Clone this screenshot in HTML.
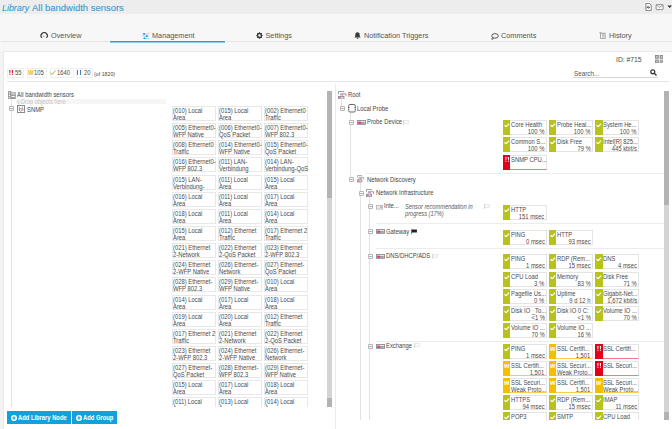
<!DOCTYPE html>
<html><head><meta charset="utf-8"><style>
html,body{margin:0;padding:0;}
body{width:672px;height:429px;overflow:hidden;position:relative;background:#f5f5f5;font-family:"Liberation Sans",sans-serif;}
.a{position:absolute;}
.t{position:absolute;white-space:nowrap;}
</style></head><body>
<div class="a" style="left:0px;top:0px;width:672px;height:14px;background:#ededed;"></div>
<div class="a" style="left:0px;top:14px;width:672px;height:37px;background:#f7f7f7;"></div>
<div class="a" style="left:0px;top:51px;width:3px;height:378px;background:#f3f3f3;"></div>
<div class="t" style="left:1.6px;top:3px;font-size:9.9px;line-height:10px;color:#399ed9;transform:scaleX(0.9);transform-origin:0 0;-webkit-text-stroke:0.15px #399ed9;font-style:italic">Library</div>
<div class="t" style="left:32.1px;top:3px;font-size:9.9px;line-height:10px;color:#399ed9;transform:scaleX(0.955);transform-origin:0 0;-webkit-text-stroke:0.15px #399ed9">All bandwidth sensors</div>
<svg class="a" style="left:645px;top:2.5px" width="27" height="8" viewBox="0 0 27 8">
<path d="M0.9 0.4h3.6l1.7 1.7v5.5H0.9z" fill="#fafafa" stroke="#6a6a6a" stroke-width="0.8"/>
<path d="M5 4.3H2.3M3.4 3.1L2.2 4.3 3.4 5.5" fill="none" stroke="#333" stroke-width="0.8"/>
<rect x="11.1" y="1.6" width="7" height="5" rx="0.5" fill="#fafafa" stroke="#777" stroke-width="0.8"/>
<path d="M11.3 2l3.3 2.4 3.3-2.4" fill="none" stroke="#777" stroke-width="0.7"/>
<path d="M22.4 2.4h4.6l-2.3 2.6z" fill="#333"/>
</svg>
<div class="a" style="left:1px;top:41px;width:108px;height:1px;background:#e6e6e6;"></div>
<div class="a" style="left:226px;top:41px;width:446px;height:1px;background:#e6e6e6;"></div>
<div class="a" style="left:110px;top:41px;width:115px;height:1px;background:#27a0d9;"></div>
<div class="a" style="left:110px;top:42px;width:115px;height:1px;background:#27a0d980;"></div>
<div class="t" style="left:51px;top:31px;font-size:7.3px;line-height:10px;color:#555;">Overview</div>
<div class="t" style="left:152px;top:31px;font-size:7.3px;line-height:10px;color:#555;">Management</div>
<div class="t" style="left:265.5px;top:31px;font-size:7.3px;line-height:10px;color:#555;">Settings</div>
<div class="t" style="left:364px;top:31px;font-size:7.3px;line-height:10px;color:#555;">Notification Triggers</div>
<div class="t" style="left:501px;top:31px;font-size:7.3px;line-height:10px;color:#555;">Comments</div>
<div class="t" style="left:609px;top:31px;font-size:7.3px;line-height:10px;color:#555;">History</div>
<svg class="a" style="left:40.2px;top:32.4px" width="8.5" height="7" viewBox="0 0 8.5 7">
<path d="M2 5.9A3.1 3.1 0 1 1 6.4 5.9" fill="none" stroke="#3a3a3a" stroke-width="1.2"/>
<path d="M3.3 3.6l1.3 1.5" stroke="#777" stroke-width="0.9"/></svg>
<svg class="a" style="left:142px;top:32.5px" width="7.5" height="6.5" viewBox="0 0 7.5 6.5">
<path d="M0.4 0.9h6.6M0.4 3.2h6.6M0.4 5.5h6.6" stroke="#8fcbee" stroke-width="0.8"/>
<rect x="1.2" y="0" width="1.8" height="1.8" rx="0.5" fill="#1e9be0"/><rect x="3.8" y="2.3" width="1.8" height="1.8" rx="0.5" fill="#1e9be0"/><rect x="1.8" y="4.6" width="1.8" height="1.8" rx="0.5" fill="#1e9be0"/></svg>
<svg class="a" style="left:256px;top:32px" width="7" height="7" viewBox="0 0 7 7">
<path d="M3.5 0.1L4.5 1.1H5.9V2.5L6.9 3.5L5.9 4.5V5.9H4.5L3.5 6.9L2.5 5.9H1.1V4.5L0.1 3.5L1.1 2.5V1.1H2.5Z" fill="#3a3a3a"/>
<circle cx="3.5" cy="3.5" r="1.2" fill="#f7f7f7"/></svg>
<svg class="a" style="left:354px;top:32px" width="7" height="7" viewBox="0 0 7 7">
<path d="M3.5 0.3c-1.5 0-2.2 1.1-2.2 2.4v1.6L0.3 5.6h6.4L5.7 4.3V2.7C5.7 1.4 5 0.3 3.5 0.3z" fill="#3a3a3a"/>
<path d="M2.6 6.2a0.9 0.9 0 0 0 1.8 0z" fill="#3a3a3a"/></svg>
<svg class="a" style="left:491px;top:32.5px" width="8" height="7" viewBox="0 0 8 7">
<ellipse cx="4" cy="2.9" rx="3.3" ry="2.3" fill="none" stroke="#4a4a4a" stroke-width="0.9"/>
<path d="M1.4 4.4L0.9 6.6 2.9 5.1" fill="#f7f7f7" stroke="#4a4a4a" stroke-width="0.8"/></svg>
<svg class="a" style="left:599px;top:32px" width="7" height="7" viewBox="0 0 7 7">
<path d="M1.6 1.2h4.6v5.4H1.6z" fill="#fafafa" stroke="#8a8a8a" stroke-width="0.8"/>
<path d="M0.5 1.2a0.9 0.9 0 0 1 1.8 0M3 2.6h2.2M3 3.8h2.2M3 5h2.2" fill="none" stroke="#8a8a8a" stroke-width="0.6"/></svg>
<div class="a" style="left:3px;top:51px;width:669px;height:378px;background:#ffffff;border-left:1px solid #e9e9e9;border-top:1px solid #e9e9e9;box-sizing:border-box;"></div>
<div class="t" style="left:615.5px;top:55px;font-size:7.5px;line-height:10px;color:#4a4a4a;transform:scaleX(0.9);transform-origin:0 0;">ID: #715</div>
<svg class="a" style="left:654.6px;top:54.6px" width="8.4" height="8.4" viewBox="0 0 8.4 8.4">
<rect x="0" y="0" width="3.8" height="3.8" fill="#8e8e8e"/><rect x="4.6" y="0" width="3.8" height="3.8" fill="#8e8e8e"/>
<rect x="0" y="4.6" width="3.8" height="3.8" fill="#8e8e8e"/><rect x="4.6" y="4.6" width="3.8" height="3.8" fill="#9a9a9a"/>
<rect x="1.1" y="1.1" width="1.6" height="1.6" fill="#cfcfcf"/><rect x="5.7" y="1.1" width="1.6" height="1.6" fill="#cfcfcf"/><rect x="1.1" y="5.7" width="1.6" height="1.6" fill="#cfcfcf"/>
<rect x="5.3" y="5.3" width="1" height="1" fill="#ddd"/><rect x="6.8" y="6.8" width="1" height="1" fill="#ddd"/>
</svg>
<div class="t" style="left:574px;top:69px;font-size:7px;line-height:10px;color:#555;transform:scaleX(0.9);transform-origin:0 0;">Search...</div>
<div class="a" style="left:573px;top:77px;width:85px;height:1px;background:#d5d5d5;"></div>
<svg class="a" style="left:650px;top:69px" width="7" height="7" viewBox="0 0 7 7">
<circle cx="2.8" cy="2.8" r="2" fill="none" stroke="#333" stroke-width="1.2"/>
<path d="M4.3 4.3L6.5 6.5" stroke="#333" stroke-width="1.4"/></svg>
<div class="a" style="left:7px;top:68px;width:17px;height:10px;background:#fff;border:1px solid #eeeeee;box-sizing:border-box;border-radius:1px;"></div>
<div class="a" style="left:26.5px;top:68px;width:20px;height:10px;background:#fff;border:1px solid #eeeeee;box-sizing:border-box;border-radius:1px;"></div>
<div class="a" style="left:49.5px;top:68px;width:24px;height:10px;background:#fff;border:1px solid #eeeeee;box-sizing:border-box;border-radius:1px;"></div>
<div class="a" style="left:76px;top:68px;width:17px;height:10px;background:#fff;border:1px solid #eeeeee;box-sizing:border-box;border-radius:1px;"></div>
<svg class="a" style="left:8.8px;top:70px" width="4.5" height="5" viewBox="0 0 4.5 5"><path d="M0.2 0h1.3l-0.2 3.2h-0.9zM2.8 0h1.3l-0.2 3.2h-0.9z" fill="#e2171c"/><rect x="0.3" y="3.8" width="1.1" height="1.1" fill="#e2171c"/><rect x="2.9" y="3.8" width="1.1" height="1.1" fill="#e2171c"/></svg>
<div class="t" style="left:14.7px;top:68px;font-size:6.5px;line-height:10px;color:#4a4a4a;transform:scaleX(0.9);transform-origin:0 0;">55</div>
<div class="t" style="left:27.7px;top:68px;font-size:6.6px;line-height:10px;color:#f2b700;transform:scaleX(0.88);transform-origin:0 0;font-weight:bold">W</div>
<div class="t" style="left:34.4px;top:68px;font-size:6.5px;line-height:10px;color:#4a4a4a;transform:scaleX(0.9);transform-origin:0 0;">105</div>
<svg class="a" style="left:50px;top:69.8px" width="6" height="5" viewBox="0 0 6 5"><path d="M0.4 2.6l1.7 1.8L5.6 0.5" fill="none" stroke="#9bbb1a" stroke-width="1"/></svg>
<div class="t" style="left:56.8px;top:68px;font-size:6.5px;line-height:10px;color:#4a4a4a;transform:scaleX(0.9);transform-origin:0 0;">1640</div>
<div class="a" style="left:77px;top:70px;width:1px;height:5px;background:#3f7fd0;"></div>
<div class="a" style="left:80px;top:70px;width:1px;height:5px;background:#3f7fd0;"></div>
<div class="t" style="left:83.6px;top:68px;font-size:6.5px;line-height:10px;color:#4a4a4a;transform:scaleX(0.9);transform-origin:0 0;">20</div>
<div class="t" style="left:93.8px;top:69px;font-size:6px;line-height:10px;color:#4a4a4a;transform:scaleX(0.88);transform-origin:0 0;">(of 1820)</div>
<div class="a" style="left:7px;top:81px;width:662px;height:1px;background:#e3e3e3;"></div>
<div class="a" style="left:335px;top:84px;width:1px;height:345px;background:#ebebeb;"></div>
<div class="a" style="left:327px;top:91px;width:5px;height:107px;background:#b3b3b3;"></div>
<div class="a" style="left:327px;top:198px;width:5px;height:200px;background:#d4d4d4;"></div>
<div class="a" style="left:327px;top:398px;width:5px;height:9px;background:#b3b3b3;"></div>
<svg class="a" style="left:7.9px;top:90.9px" width="8" height="8" viewBox="0 0 8 8">
<path d="M0 0H3.2V1.2H7.8V8H0Z" fill="#9c9c9c"/>
<rect x="3.3" y="2.5" width="3.6" height="0.9" fill="#fff"/><rect x="3.3" y="5.1" width="3.6" height="0.9" fill="#fff"/>
<circle cx="1.5" cy="1.9" r="0.65" fill="#fff"/><circle cx="1.5" cy="4.4" r="0.65" fill="#fff"/><circle cx="1.5" cy="6.7" r="0.65" fill="#fff"/></svg>
<div class="t" style="left:17.4px;top:90px;font-size:6.5px;line-height:10px;color:#454545;transform:scaleX(0.9);transform-origin:0 0;">All bandwidth sensors</div>
<div class="a" style="left:16px;top:99px;width:150px;height:5px;background:#f6f6f6;"></div>
<svg class="a" style="left:17.4px;top:99.6px" width="3.5" height="5" viewBox="0 0 3.5 5"><circle cx="1.75" cy="1.7" r="1.2" fill="none" stroke="#c8c8c8" stroke-width="0.7"/><path d="M1.75 2.9V4.8" stroke="#c8c8c8" stroke-width="0.7"/></svg>
<div class="t" style="left:21px;top:97px;font-size:6.5px;line-height:10px;color:#c4c4c4;transform:scaleX(0.87);transform-origin:0 0;">Drop objects here</div>
<div class="a" style="left:10.5px;top:99px;width:0.8px;height:308px;background:#e2e2e2;"></div>
<svg class="a" style="left:9px;top:106px" width="5" height="5" viewBox="0 0 5 5"><rect x="0.4" y="0.4" width="4.2" height="4.2" rx="0.6" fill="#fff" stroke="#a2a2a2" stroke-width="0.85"/><path d="M1.3 2.5h2.4" stroke="#8a8a8a" stroke-width="0.8"/></svg>
<svg class="a" style="left:16.9px;top:104.9px" width="8" height="8" viewBox="0 0 8 8">
<rect x="0.5" y="0.5" width="7" height="7" fill="#fff" stroke="#8c8c8c" stroke-width="1"/>
<path d="M2.3 1.6V4.6" stroke="#8c8c8c" stroke-width="0.9"/><circle cx="3.6" cy="4.8" r="1.3" fill="none" stroke="#8c8c8c" stroke-width="0.9"/>
<path d="M5.5 1.5V2.8L6.2 5.6" fill="none" stroke="#8c8c8c" stroke-width="0.8"/></svg>
<div class="t" style="left:26.8px;top:105px;font-size:6.5px;line-height:10px;color:#454545;transform:scaleX(0.9);transform-origin:0 0;">SNMP</div>
<div class="a" style="left:0;top:0;width:672px;height:406.8px;overflow:hidden">
<div class="a" style="left:171.90px;top:106px;width:44.6px;height:15.4px;border:1px solid #e8e8e8;box-sizing:border-box;background:#fff"></div>
<div class="t" style="left:173.4px;top:106px;font-size:6.5px;line-height:10px;color:#4a4a4a;transform:scaleX(0.9);transform-origin:0 0;">(010) Local</div>
<div class="t" style="left:173.4px;top:113px;font-size:6.5px;line-height:10px;color:#4a4a4a;transform:scaleX(0.9);transform-origin:0 0;">Area</div>
<div class="a" style="left:217.90px;top:106px;width:44.6px;height:15.4px;border:1px solid #e8e8e8;box-sizing:border-box;background:#fff"></div>
<div class="t" style="left:219.4px;top:106px;font-size:6.5px;line-height:10px;color:#4a4a4a;transform:scaleX(0.9);transform-origin:0 0;">(015) Local</div>
<div class="t" style="left:219.4px;top:113px;font-size:6.5px;line-height:10px;color:#4a4a4a;transform:scaleX(0.9);transform-origin:0 0;">Area</div>
<div class="a" style="left:263.90px;top:106px;width:44.6px;height:15.4px;border:1px solid #e8e8e8;box-sizing:border-box;background:#fff"></div>
<div class="t" style="left:265.4px;top:106px;font-size:6.5px;line-height:10px;color:#4a4a4a;transform:scaleX(0.9);transform-origin:0 0;">(002) Ethernet0</div>
<div class="t" style="left:265.4px;top:113px;font-size:6.5px;line-height:10px;color:#4a4a4a;transform:scaleX(0.9);transform-origin:0 0;">Traffic</div>
<div class="a" style="left:171.90px;top:123px;width:44.6px;height:15.4px;border:1px solid #e8e8e8;box-sizing:border-box;background:#fff"></div>
<div class="t" style="left:173.4px;top:123px;font-size:6.5px;line-height:10px;color:#4a4a4a;transform:scaleX(0.9);transform-origin:0 0;">(005) Ethernet0-</div>
<div class="t" style="left:173.4px;top:130px;font-size:6.5px;line-height:10px;color:#4a4a4a;transform:scaleX(0.9);transform-origin:0 0;">WFP Native</div>
<div class="a" style="left:217.90px;top:123px;width:44.6px;height:15.4px;border:1px solid #e8e8e8;box-sizing:border-box;background:#fff"></div>
<div class="t" style="left:219.4px;top:123px;font-size:6.5px;line-height:10px;color:#4a4a4a;transform:scaleX(0.9);transform-origin:0 0;">(006) Ethernet0-</div>
<div class="t" style="left:219.4px;top:130px;font-size:6.5px;line-height:10px;color:#4a4a4a;transform:scaleX(0.9);transform-origin:0 0;">QoS Packet</div>
<div class="a" style="left:263.90px;top:123px;width:44.6px;height:15.4px;border:1px solid #e8e8e8;box-sizing:border-box;background:#fff"></div>
<div class="t" style="left:265.4px;top:123px;font-size:6.5px;line-height:10px;color:#4a4a4a;transform:scaleX(0.9);transform-origin:0 0;">(007) Ethernet0-</div>
<div class="t" style="left:265.4px;top:130px;font-size:6.5px;line-height:10px;color:#4a4a4a;transform:scaleX(0.9);transform-origin:0 0;">WFP 802.3</div>
<div class="a" style="left:171.90px;top:140px;width:44.6px;height:15.4px;border:1px solid #e8e8e8;box-sizing:border-box;background:#fff"></div>
<div class="t" style="left:173.4px;top:140px;font-size:6.5px;line-height:10px;color:#4a4a4a;transform:scaleX(0.9);transform-origin:0 0;">(008) Ethernet0</div>
<div class="t" style="left:173.4px;top:147px;font-size:6.5px;line-height:10px;color:#4a4a4a;transform:scaleX(0.9);transform-origin:0 0;">Traffic</div>
<div class="a" style="left:217.90px;top:140px;width:44.6px;height:15.4px;border:1px solid #e8e8e8;box-sizing:border-box;background:#fff"></div>
<div class="t" style="left:219.4px;top:140px;font-size:6.5px;line-height:10px;color:#4a4a4a;transform:scaleX(0.9);transform-origin:0 0;">(014) Ethernet0-</div>
<div class="t" style="left:219.4px;top:147px;font-size:6.5px;line-height:10px;color:#4a4a4a;transform:scaleX(0.9);transform-origin:0 0;">WFP Native</div>
<div class="a" style="left:263.90px;top:140px;width:44.6px;height:15.4px;border:1px solid #e8e8e8;box-sizing:border-box;background:#fff"></div>
<div class="t" style="left:265.4px;top:140px;font-size:6.5px;line-height:10px;color:#4a4a4a;transform:scaleX(0.9);transform-origin:0 0;">(015) Ethernet0-</div>
<div class="t" style="left:265.4px;top:147px;font-size:6.5px;line-height:10px;color:#4a4a4a;transform:scaleX(0.9);transform-origin:0 0;">QoS Packet</div>
<div class="a" style="left:171.90px;top:157px;width:44.6px;height:15.4px;border:1px solid #e8e8e8;box-sizing:border-box;background:#fff"></div>
<div class="t" style="left:173.4px;top:157px;font-size:6.5px;line-height:10px;color:#4a4a4a;transform:scaleX(0.9);transform-origin:0 0;">(016) Ethernet0-</div>
<div class="t" style="left:173.4px;top:164px;font-size:6.5px;line-height:10px;color:#4a4a4a;transform:scaleX(0.9);transform-origin:0 0;">WFP 802.3</div>
<div class="a" style="left:217.90px;top:157px;width:44.6px;height:15.4px;border:1px solid #e8e8e8;box-sizing:border-box;background:#fff"></div>
<div class="t" style="left:219.4px;top:157px;font-size:6.5px;line-height:10px;color:#4a4a4a;transform:scaleX(0.9);transform-origin:0 0;">(011) LAN-</div>
<div class="t" style="left:219.4px;top:164px;font-size:6.5px;line-height:10px;color:#4a4a4a;transform:scaleX(0.9);transform-origin:0 0;">Verbindung</div>
<div class="a" style="left:263.90px;top:157px;width:44.6px;height:15.4px;border:1px solid #e8e8e8;box-sizing:border-box;background:#fff"></div>
<div class="t" style="left:265.4px;top:157px;font-size:6.5px;line-height:10px;color:#4a4a4a;transform:scaleX(0.9);transform-origin:0 0;">(014) LAN-</div>
<div class="t" style="left:265.4px;top:164px;font-size:6.5px;line-height:10px;color:#4a4a4a;transform:scaleX(0.9);transform-origin:0 0;">Verbindung-QoS</div>
<div class="a" style="left:171.90px;top:175px;width:44.6px;height:15.4px;border:1px solid #e8e8e8;box-sizing:border-box;background:#fff"></div>
<div class="t" style="left:173.4px;top:175px;font-size:6.5px;line-height:10px;color:#4a4a4a;transform:scaleX(0.9);transform-origin:0 0;">(015) LAN-</div>
<div class="t" style="left:173.4px;top:182px;font-size:6.5px;line-height:10px;color:#4a4a4a;transform:scaleX(0.9);transform-origin:0 0;">Verbindung-</div>
<div class="a" style="left:217.90px;top:175px;width:44.6px;height:15.4px;border:1px solid #e8e8e8;box-sizing:border-box;background:#fff"></div>
<div class="t" style="left:219.4px;top:175px;font-size:6.5px;line-height:10px;color:#4a4a4a;transform:scaleX(0.9);transform-origin:0 0;">(011) Local</div>
<div class="t" style="left:219.4px;top:182px;font-size:6.5px;line-height:10px;color:#4a4a4a;transform:scaleX(0.9);transform-origin:0 0;">Area</div>
<div class="a" style="left:263.90px;top:175px;width:44.6px;height:15.4px;border:1px solid #e8e8e8;box-sizing:border-box;background:#fff"></div>
<div class="t" style="left:265.4px;top:175px;font-size:6.5px;line-height:10px;color:#4a4a4a;transform:scaleX(0.9);transform-origin:0 0;">(015) Local</div>
<div class="t" style="left:265.4px;top:182px;font-size:6.5px;line-height:10px;color:#4a4a4a;transform:scaleX(0.9);transform-origin:0 0;">Area</div>
<div class="a" style="left:171.90px;top:192px;width:44.6px;height:15.4px;border:1px solid #e8e8e8;box-sizing:border-box;background:#fff"></div>
<div class="t" style="left:173.4px;top:192px;font-size:6.5px;line-height:10px;color:#4a4a4a;transform:scaleX(0.9);transform-origin:0 0;">(016) Local</div>
<div class="t" style="left:173.4px;top:199px;font-size:6.5px;line-height:10px;color:#4a4a4a;transform:scaleX(0.9);transform-origin:0 0;">Area</div>
<div class="a" style="left:217.90px;top:192px;width:44.6px;height:15.4px;border:1px solid #e8e8e8;box-sizing:border-box;background:#fff"></div>
<div class="t" style="left:219.4px;top:192px;font-size:6.5px;line-height:10px;color:#4a4a4a;transform:scaleX(0.9);transform-origin:0 0;">(011) Local</div>
<div class="t" style="left:219.4px;top:199px;font-size:6.5px;line-height:10px;color:#4a4a4a;transform:scaleX(0.9);transform-origin:0 0;">Area</div>
<div class="a" style="left:263.90px;top:192px;width:44.6px;height:15.4px;border:1px solid #e8e8e8;box-sizing:border-box;background:#fff"></div>
<div class="t" style="left:265.4px;top:192px;font-size:6.5px;line-height:10px;color:#4a4a4a;transform:scaleX(0.9);transform-origin:0 0;">(017) Local</div>
<div class="t" style="left:265.4px;top:199px;font-size:6.5px;line-height:10px;color:#4a4a4a;transform:scaleX(0.9);transform-origin:0 0;">Area</div>
<div class="a" style="left:171.90px;top:209px;width:44.6px;height:15.4px;border:1px solid #e8e8e8;box-sizing:border-box;background:#fff"></div>
<div class="t" style="left:173.4px;top:209px;font-size:6.5px;line-height:10px;color:#4a4a4a;transform:scaleX(0.9);transform-origin:0 0;">(018) Local</div>
<div class="t" style="left:173.4px;top:216px;font-size:6.5px;line-height:10px;color:#4a4a4a;transform:scaleX(0.9);transform-origin:0 0;">Area</div>
<div class="a" style="left:217.90px;top:209px;width:44.6px;height:15.4px;border:1px solid #e8e8e8;box-sizing:border-box;background:#fff"></div>
<div class="t" style="left:219.4px;top:209px;font-size:6.5px;line-height:10px;color:#4a4a4a;transform:scaleX(0.9);transform-origin:0 0;">(011) Local</div>
<div class="t" style="left:219.4px;top:216px;font-size:6.5px;line-height:10px;color:#4a4a4a;transform:scaleX(0.9);transform-origin:0 0;">Area</div>
<div class="a" style="left:263.90px;top:209px;width:44.6px;height:15.4px;border:1px solid #e8e8e8;box-sizing:border-box;background:#fff"></div>
<div class="t" style="left:265.4px;top:209px;font-size:6.5px;line-height:10px;color:#4a4a4a;transform:scaleX(0.9);transform-origin:0 0;">(014) Local</div>
<div class="t" style="left:265.4px;top:216px;font-size:6.5px;line-height:10px;color:#4a4a4a;transform:scaleX(0.9);transform-origin:0 0;">Area</div>
<div class="a" style="left:171.90px;top:226px;width:44.6px;height:15.4px;border:1px solid #e8e8e8;box-sizing:border-box;background:#fff"></div>
<div class="t" style="left:173.4px;top:226px;font-size:6.5px;line-height:10px;color:#4a4a4a;transform:scaleX(0.9);transform-origin:0 0;">(015) Local</div>
<div class="t" style="left:173.4px;top:233px;font-size:6.5px;line-height:10px;color:#4a4a4a;transform:scaleX(0.9);transform-origin:0 0;">Area</div>
<div class="a" style="left:217.90px;top:226px;width:44.6px;height:15.4px;border:1px solid #e8e8e8;box-sizing:border-box;background:#fff"></div>
<div class="t" style="left:219.4px;top:226px;font-size:6.5px;line-height:10px;color:#4a4a4a;transform:scaleX(0.9);transform-origin:0 0;">(012) Ethernet</div>
<div class="t" style="left:219.4px;top:233px;font-size:6.5px;line-height:10px;color:#4a4a4a;transform:scaleX(0.9);transform-origin:0 0;">Traffic</div>
<div class="a" style="left:263.90px;top:226px;width:44.6px;height:15.4px;border:1px solid #e8e8e8;box-sizing:border-box;background:#fff"></div>
<div class="t" style="left:265.4px;top:226px;font-size:6.5px;line-height:10px;color:#4a4a4a;transform:scaleX(0.9);transform-origin:0 0;">(017) Ethernet 2</div>
<div class="t" style="left:265.4px;top:233px;font-size:6.5px;line-height:10px;color:#4a4a4a;transform:scaleX(0.9);transform-origin:0 0;">Traffic</div>
<div class="a" style="left:171.90px;top:243px;width:44.6px;height:15.4px;border:1px solid #e8e8e8;box-sizing:border-box;background:#fff"></div>
<div class="t" style="left:173.4px;top:243px;font-size:6.5px;line-height:10px;color:#4a4a4a;transform:scaleX(0.9);transform-origin:0 0;">(021) Ethernet</div>
<div class="t" style="left:173.4px;top:250px;font-size:6.5px;line-height:10px;color:#4a4a4a;transform:scaleX(0.9);transform-origin:0 0;">2-Network</div>
<div class="a" style="left:217.90px;top:243px;width:44.6px;height:15.4px;border:1px solid #e8e8e8;box-sizing:border-box;background:#fff"></div>
<div class="t" style="left:219.4px;top:243px;font-size:6.5px;line-height:10px;color:#4a4a4a;transform:scaleX(0.9);transform-origin:0 0;">(022) Ethernet</div>
<div class="t" style="left:219.4px;top:250px;font-size:6.5px;line-height:10px;color:#4a4a4a;transform:scaleX(0.9);transform-origin:0 0;">2-QoS Packet</div>
<div class="a" style="left:263.90px;top:243px;width:44.6px;height:15.4px;border:1px solid #e8e8e8;box-sizing:border-box;background:#fff"></div>
<div class="t" style="left:265.4px;top:243px;font-size:6.5px;line-height:10px;color:#4a4a4a;transform:scaleX(0.9);transform-origin:0 0;">(023) Ethernet</div>
<div class="t" style="left:265.4px;top:250px;font-size:6.5px;line-height:10px;color:#4a4a4a;transform:scaleX(0.9);transform-origin:0 0;">2-WFP 802.3</div>
<div class="a" style="left:171.90px;top:260px;width:44.6px;height:15.4px;border:1px solid #e8e8e8;box-sizing:border-box;background:#fff"></div>
<div class="t" style="left:173.4px;top:260px;font-size:6.5px;line-height:10px;color:#4a4a4a;transform:scaleX(0.9);transform-origin:0 0;">(024) Ethernet</div>
<div class="t" style="left:173.4px;top:267px;font-size:6.5px;line-height:10px;color:#4a4a4a;transform:scaleX(0.9);transform-origin:0 0;">2-WFP Native</div>
<div class="a" style="left:217.90px;top:260px;width:44.6px;height:15.4px;border:1px solid #e8e8e8;box-sizing:border-box;background:#fff"></div>
<div class="t" style="left:219.4px;top:260px;font-size:6.5px;line-height:10px;color:#4a4a4a;transform:scaleX(0.9);transform-origin:0 0;">(026) Ethernet-</div>
<div class="t" style="left:219.4px;top:267px;font-size:6.5px;line-height:10px;color:#4a4a4a;transform:scaleX(0.9);transform-origin:0 0;">Network</div>
<div class="a" style="left:263.90px;top:260px;width:44.6px;height:15.4px;border:1px solid #e8e8e8;box-sizing:border-box;background:#fff"></div>
<div class="t" style="left:265.4px;top:260px;font-size:6.5px;line-height:10px;color:#4a4a4a;transform:scaleX(0.9);transform-origin:0 0;">(027) Ethernet-</div>
<div class="t" style="left:265.4px;top:267px;font-size:6.5px;line-height:10px;color:#4a4a4a;transform:scaleX(0.9);transform-origin:0 0;">QoS Packet</div>
<div class="a" style="left:171.90px;top:277px;width:44.6px;height:15.4px;border:1px solid #e8e8e8;box-sizing:border-box;background:#fff"></div>
<div class="t" style="left:173.4px;top:277px;font-size:6.5px;line-height:10px;color:#4a4a4a;transform:scaleX(0.9);transform-origin:0 0;">(028) Ethernet-</div>
<div class="t" style="left:173.4px;top:284px;font-size:6.5px;line-height:10px;color:#4a4a4a;transform:scaleX(0.9);transform-origin:0 0;">WFP 802.3</div>
<div class="a" style="left:217.90px;top:277px;width:44.6px;height:15.4px;border:1px solid #e8e8e8;box-sizing:border-box;background:#fff"></div>
<div class="t" style="left:219.4px;top:277px;font-size:6.5px;line-height:10px;color:#4a4a4a;transform:scaleX(0.9);transform-origin:0 0;">(029) Ethernet-</div>
<div class="t" style="left:219.4px;top:284px;font-size:6.5px;line-height:10px;color:#4a4a4a;transform:scaleX(0.9);transform-origin:0 0;">WFP Native</div>
<div class="a" style="left:263.90px;top:277px;width:44.6px;height:15.4px;border:1px solid #e8e8e8;box-sizing:border-box;background:#fff"></div>
<div class="t" style="left:265.4px;top:277px;font-size:6.5px;line-height:10px;color:#4a4a4a;transform:scaleX(0.9);transform-origin:0 0;">(010) Local</div>
<div class="t" style="left:265.4px;top:284px;font-size:6.5px;line-height:10px;color:#4a4a4a;transform:scaleX(0.9);transform-origin:0 0;">Area</div>
<div class="a" style="left:171.90px;top:295px;width:44.6px;height:15.4px;border:1px solid #e8e8e8;box-sizing:border-box;background:#fff"></div>
<div class="t" style="left:173.4px;top:295px;font-size:6.5px;line-height:10px;color:#4a4a4a;transform:scaleX(0.9);transform-origin:0 0;">(014) Local</div>
<div class="t" style="left:173.4px;top:302px;font-size:6.5px;line-height:10px;color:#4a4a4a;transform:scaleX(0.9);transform-origin:0 0;">Area</div>
<div class="a" style="left:217.90px;top:295px;width:44.6px;height:15.4px;border:1px solid #e8e8e8;box-sizing:border-box;background:#fff"></div>
<div class="t" style="left:219.4px;top:295px;font-size:6.5px;line-height:10px;color:#4a4a4a;transform:scaleX(0.9);transform-origin:0 0;">(017) Local</div>
<div class="t" style="left:219.4px;top:302px;font-size:6.5px;line-height:10px;color:#4a4a4a;transform:scaleX(0.9);transform-origin:0 0;">Area</div>
<div class="a" style="left:263.90px;top:295px;width:44.6px;height:15.4px;border:1px solid #e8e8e8;box-sizing:border-box;background:#fff"></div>
<div class="t" style="left:265.4px;top:295px;font-size:6.5px;line-height:10px;color:#4a4a4a;transform:scaleX(0.9);transform-origin:0 0;">(018) Local</div>
<div class="t" style="left:265.4px;top:302px;font-size:6.5px;line-height:10px;color:#4a4a4a;transform:scaleX(0.9);transform-origin:0 0;">Area</div>
<div class="a" style="left:171.90px;top:312px;width:44.6px;height:15.4px;border:1px solid #e8e8e8;box-sizing:border-box;background:#fff"></div>
<div class="t" style="left:173.4px;top:312px;font-size:6.5px;line-height:10px;color:#4a4a4a;transform:scaleX(0.9);transform-origin:0 0;">(019) Local</div>
<div class="t" style="left:173.4px;top:319px;font-size:6.5px;line-height:10px;color:#4a4a4a;transform:scaleX(0.9);transform-origin:0 0;">Area</div>
<div class="a" style="left:217.90px;top:312px;width:44.6px;height:15.4px;border:1px solid #e8e8e8;box-sizing:border-box;background:#fff"></div>
<div class="t" style="left:219.4px;top:312px;font-size:6.5px;line-height:10px;color:#4a4a4a;transform:scaleX(0.9);transform-origin:0 0;">(020) Local</div>
<div class="t" style="left:219.4px;top:319px;font-size:6.5px;line-height:10px;color:#4a4a4a;transform:scaleX(0.9);transform-origin:0 0;">Area</div>
<div class="a" style="left:263.90px;top:312px;width:44.6px;height:15.4px;border:1px solid #e8e8e8;box-sizing:border-box;background:#fff"></div>
<div class="t" style="left:265.4px;top:312px;font-size:6.5px;line-height:10px;color:#4a4a4a;transform:scaleX(0.9);transform-origin:0 0;">(012) Ethernet</div>
<div class="t" style="left:265.4px;top:319px;font-size:6.5px;line-height:10px;color:#4a4a4a;transform:scaleX(0.9);transform-origin:0 0;">Traffic</div>
<div class="a" style="left:171.90px;top:329px;width:44.6px;height:15.4px;border:1px solid #e8e8e8;box-sizing:border-box;background:#fff"></div>
<div class="t" style="left:173.4px;top:329px;font-size:6.5px;line-height:10px;color:#4a4a4a;transform:scaleX(0.9);transform-origin:0 0;">(017) Ethernet 2</div>
<div class="t" style="left:173.4px;top:336px;font-size:6.5px;line-height:10px;color:#4a4a4a;transform:scaleX(0.9);transform-origin:0 0;">Traffic</div>
<div class="a" style="left:217.90px;top:329px;width:44.6px;height:15.4px;border:1px solid #e8e8e8;box-sizing:border-box;background:#fff"></div>
<div class="t" style="left:219.4px;top:329px;font-size:6.5px;line-height:10px;color:#4a4a4a;transform:scaleX(0.9);transform-origin:0 0;">(021) Ethernet</div>
<div class="t" style="left:219.4px;top:336px;font-size:6.5px;line-height:10px;color:#4a4a4a;transform:scaleX(0.9);transform-origin:0 0;">2-Network</div>
<div class="a" style="left:263.90px;top:329px;width:44.6px;height:15.4px;border:1px solid #e8e8e8;box-sizing:border-box;background:#fff"></div>
<div class="t" style="left:265.4px;top:329px;font-size:6.5px;line-height:10px;color:#4a4a4a;transform:scaleX(0.9);transform-origin:0 0;">(022) Ethernet</div>
<div class="t" style="left:265.4px;top:336px;font-size:6.5px;line-height:10px;color:#4a4a4a;transform:scaleX(0.9);transform-origin:0 0;">2-QoS Packet</div>
<div class="a" style="left:171.90px;top:346px;width:44.6px;height:15.4px;border:1px solid #e8e8e8;box-sizing:border-box;background:#fff"></div>
<div class="t" style="left:173.4px;top:346px;font-size:6.5px;line-height:10px;color:#4a4a4a;transform:scaleX(0.9);transform-origin:0 0;">(023) Ethernet</div>
<div class="t" style="left:173.4px;top:353px;font-size:6.5px;line-height:10px;color:#4a4a4a;transform:scaleX(0.9);transform-origin:0 0;">2-WFP 802.3</div>
<div class="a" style="left:217.90px;top:346px;width:44.6px;height:15.4px;border:1px solid #e8e8e8;box-sizing:border-box;background:#fff"></div>
<div class="t" style="left:219.4px;top:346px;font-size:6.5px;line-height:10px;color:#4a4a4a;transform:scaleX(0.9);transform-origin:0 0;">(024) Ethernet</div>
<div class="t" style="left:219.4px;top:353px;font-size:6.5px;line-height:10px;color:#4a4a4a;transform:scaleX(0.9);transform-origin:0 0;">2-WFP Native</div>
<div class="a" style="left:263.90px;top:346px;width:44.6px;height:15.4px;border:1px solid #e8e8e8;box-sizing:border-box;background:#fff"></div>
<div class="t" style="left:265.4px;top:346px;font-size:6.5px;line-height:10px;color:#4a4a4a;transform:scaleX(0.9);transform-origin:0 0;">(026) Ethernet-</div>
<div class="t" style="left:265.4px;top:353px;font-size:6.5px;line-height:10px;color:#4a4a4a;transform:scaleX(0.9);transform-origin:0 0;">Network</div>
<div class="a" style="left:171.90px;top:363px;width:44.6px;height:15.4px;border:1px solid #e8e8e8;box-sizing:border-box;background:#fff"></div>
<div class="t" style="left:173.4px;top:363px;font-size:6.5px;line-height:10px;color:#4a4a4a;transform:scaleX(0.9);transform-origin:0 0;">(027) Ethernet-</div>
<div class="t" style="left:173.4px;top:370px;font-size:6.5px;line-height:10px;color:#4a4a4a;transform:scaleX(0.9);transform-origin:0 0;">QoS Packet</div>
<div class="a" style="left:217.90px;top:363px;width:44.6px;height:15.4px;border:1px solid #e8e8e8;box-sizing:border-box;background:#fff"></div>
<div class="t" style="left:219.4px;top:363px;font-size:6.5px;line-height:10px;color:#4a4a4a;transform:scaleX(0.9);transform-origin:0 0;">(028) Ethernet-</div>
<div class="t" style="left:219.4px;top:370px;font-size:6.5px;line-height:10px;color:#4a4a4a;transform:scaleX(0.9);transform-origin:0 0;">WFP 802.3</div>
<div class="a" style="left:263.90px;top:363px;width:44.6px;height:15.4px;border:1px solid #e8e8e8;box-sizing:border-box;background:#fff"></div>
<div class="t" style="left:265.4px;top:363px;font-size:6.5px;line-height:10px;color:#4a4a4a;transform:scaleX(0.9);transform-origin:0 0;">(029) Ethernet-</div>
<div class="t" style="left:265.4px;top:370px;font-size:6.5px;line-height:10px;color:#4a4a4a;transform:scaleX(0.9);transform-origin:0 0;">WFP Native</div>
<div class="a" style="left:171.90px;top:380px;width:44.6px;height:15.4px;border:1px solid #e8e8e8;box-sizing:border-box;background:#fff"></div>
<div class="t" style="left:173.4px;top:380px;font-size:6.5px;line-height:10px;color:#4a4a4a;transform:scaleX(0.9);transform-origin:0 0;">(015) Local</div>
<div class="t" style="left:173.4px;top:387px;font-size:6.5px;line-height:10px;color:#4a4a4a;transform:scaleX(0.9);transform-origin:0 0;">Area</div>
<div class="a" style="left:217.90px;top:380px;width:44.6px;height:15.4px;border:1px solid #e8e8e8;box-sizing:border-box;background:#fff"></div>
<div class="t" style="left:219.4px;top:380px;font-size:6.5px;line-height:10px;color:#4a4a4a;transform:scaleX(0.9);transform-origin:0 0;">(017) Local</div>
<div class="t" style="left:219.4px;top:387px;font-size:6.5px;line-height:10px;color:#4a4a4a;transform:scaleX(0.9);transform-origin:0 0;">Area</div>
<div class="a" style="left:263.90px;top:380px;width:44.6px;height:15.4px;border:1px solid #e8e8e8;box-sizing:border-box;background:#fff"></div>
<div class="t" style="left:265.4px;top:380px;font-size:6.5px;line-height:10px;color:#4a4a4a;transform:scaleX(0.9);transform-origin:0 0;">(018) Local</div>
<div class="t" style="left:265.4px;top:387px;font-size:6.5px;line-height:10px;color:#4a4a4a;transform:scaleX(0.9);transform-origin:0 0;">Area</div>
<div class="a" style="left:171.90px;top:397px;width:44.6px;height:15.4px;border:1px solid #e8e8e8;box-sizing:border-box;background:#fff"></div>
<div class="t" style="left:173.4px;top:397px;font-size:6.5px;line-height:10px;color:#4a4a4a;transform:scaleX(0.9);transform-origin:0 0;">(011) Local</div>
<div class="t" style="left:173.4px;top:404px;font-size:6.5px;line-height:10px;color:#4a4a4a;transform:scaleX(0.9);transform-origin:0 0;">Area</div>
<div class="a" style="left:217.90px;top:397px;width:44.6px;height:15.4px;border:1px solid #e8e8e8;box-sizing:border-box;background:#fff"></div>
<div class="t" style="left:219.4px;top:397px;font-size:6.5px;line-height:10px;color:#4a4a4a;transform:scaleX(0.9);transform-origin:0 0;">(013) Local</div>
<div class="t" style="left:219.4px;top:404px;font-size:6.5px;line-height:10px;color:#4a4a4a;transform:scaleX(0.9);transform-origin:0 0;">Area</div>
<div class="a" style="left:263.90px;top:397px;width:44.6px;height:15.4px;border:1px solid #e8e8e8;box-sizing:border-box;background:#fff"></div>
<div class="t" style="left:265.4px;top:397px;font-size:6.5px;line-height:10px;color:#4a4a4a;transform:scaleX(0.9);transform-origin:0 0;">(014) Local</div>
<div class="t" style="left:265.4px;top:404px;font-size:6.5px;line-height:10px;color:#4a4a4a;transform:scaleX(0.9);transform-origin:0 0;">Area</div>
</div>
<div class="a" style="left:7.1px;top:410.5px;width:63.6px;height:13.4px;background:#14a0dc;"></div>
<svg class="a" style="left:10.899999999999999px;top:414.5px" width="6" height="6" viewBox="0 0 6 6"><circle cx="3" cy="3" r="3" fill="#fff"/><path d="M3 1.3v3.4M1.3 3h3.4" stroke="#14a0dc" stroke-width="1.1"/></svg>
<div class="t" style="left:17.799999999999997px;top:413px;font-size:6.6px;line-height:10px;color:#fff;transform:scaleX(0.88);transform-origin:0 0;font-weight:bold">Add Library Node</div>
<div class="a" style="left:72px;top:410.5px;width:44.6px;height:13.4px;background:#14a0dc;"></div>
<svg class="a" style="left:75.8px;top:414.5px" width="6" height="6" viewBox="0 0 6 6"><circle cx="3" cy="3" r="3" fill="#fff"/><path d="M3 1.3v3.4M1.3 3h3.4" stroke="#14a0dc" stroke-width="1.1"/></svg>
<div class="t" style="left:82.7px;top:413px;font-size:6.6px;line-height:10px;color:#fff;transform:scaleX(0.88);transform-origin:0 0;font-weight:bold">Add Group</div>
<div class="a" style="left:664px;top:91px;width:5px;height:114px;background:#b3b3b3;"></div>
<div class="a" style="left:664px;top:205px;width:5px;height:207px;background:#d4d4d4;"></div>
<div class="a" style="left:664px;top:412px;width:5px;height:8px;background:#b3b3b3;"></div>
<svg class="a" style="left:338px;top:90.6px" width="8.5" height="8.5" viewBox="0 0 8.5 8.5">
<path d="M0.45 3V0.45H5.8V1.3" fill="none" stroke="#8a8a8a" stroke-width="0.9"/>
<path d="M2.5 4.2V2.9H8V5.2" fill="none" stroke="#8a8a8a" stroke-width="0.9"/>
<rect x="3.4" y="3.4" width="1.8" height="1.2" fill="#f25aa8"/>
<rect x="0.45" y="5.45" width="5.5" height="2.8" fill="#d8d8d8" stroke="#8f8f8f" stroke-width="0.9"/>
<rect x="1.1" y="6.2" width="1.8" height="1.3" fill="#f25aa8"/></svg>
<div class="t" style="left:347.7px;top:90px;font-size:6.5px;line-height:10px;color:#454545;transform:scaleX(0.9);transform-origin:0 0;">Root</div>
<div class="a" style="left:341px;top:99px;width:0.8px;height:7px;background:#e2e2e2;"></div>
<svg class="a" style="left:339.8px;top:106px" width="5" height="5" viewBox="0 0 5 5"><rect x="0.4" y="0.4" width="4.2" height="4.2" rx="0.6" fill="#fff" stroke="#a2a2a2" stroke-width="0.85"/><path d="M1.3 2.5h2.4" stroke="#8a8a8a" stroke-width="0.8"/></svg>
<svg class="a" style="left:347.6px;top:104.1px" width="8" height="8.5" viewBox="0 0 8 8.5">
<path d="M0.6 2.6V2A1.5 1.5 0 0 1 2.1 0.5H5.9A1.5 1.5 0 0 1 7.4 2V2.6M0.6 5.9V6.5A1.5 1.5 0 0 0 2.1 8H5.9A1.5 1.5 0 0 0 7.4 6.5V5.9" fill="none" stroke="#555" stroke-width="0.9"/>
<circle cx="0.8" cy="3.4" r="0.7" fill="#333"/><circle cx="0.8" cy="5.1" r="0.7" fill="#333"/><circle cx="7.2" cy="3.4" r="0.7" fill="#333"/><circle cx="7.2" cy="5.1" r="0.7" fill="#333"/>
</svg>
<div class="t" style="left:357px;top:104px;font-size:6.5px;line-height:10px;color:#454545;transform:scaleX(0.9);transform-origin:0 0;">Local Probe</div>
<div class="a" style="left:350.2px;top:112.5px;width:0.8px;height:65px;background:#e2e2e2;"></div>
<svg class="a" style="left:349.3px;top:120px" width="5" height="5" viewBox="0 0 5 5"><rect x="0.4" y="0.4" width="4.2" height="4.2" rx="0.6" fill="#fff" stroke="#a2a2a2" stroke-width="0.85"/><path d="M1.3 2.5h2.4" stroke="#8a8a8a" stroke-width="0.8"/></svg>
<svg class="a" style="left:357px;top:119.5px" width="9" height="5" viewBox="0 0 9 5">
<rect x="0.45" y="0.45" width="8" height="3.9" fill="#e9e9e9" stroke="#8c8c8c" stroke-width="0.9"/>
<rect x="1.2" y="2" width="6.5" height="1.8" fill="#9a9a9a"/><rect x="1.4" y="1.6" width="2.4" height="2.2" fill="#f0288c"/></svg>
<div class="t" style="left:366.7px;top:117px;font-size:6.5px;line-height:10px;color:#454545;transform:scaleX(0.9);transform-origin:0 0;">Probe Device</div>
<svg class="a" style="left:403px;top:119.5px" width="6.5" height="5" viewBox="0 0 6.5 5"><path d="M0.5 0.2v4.8" stroke="#d2d2d2" stroke-width="0.8"/><path d="M0.9 0.6h4.9l-0.9 1.3 0.9 1.4h-4.9z" fill="none" stroke="#d5d5d5" stroke-width="0.6"/></svg>
<div class="a" style="left:365.5px;top:172.5px;width:298px;height:0.8px;background:#ececec;"></div>
<svg class="a" style="left:349.3px;top:177.2px" width="5" height="5" viewBox="0 0 5 5"><rect x="0.4" y="0.4" width="4.2" height="4.2" rx="0.6" fill="#fff" stroke="#a2a2a2" stroke-width="0.85"/><path d="M1.3 2.5h2.4" stroke="#8a8a8a" stroke-width="0.8"/></svg>
<svg class="a" style="left:357.3px;top:175.2px" width="7" height="7.5" viewBox="0 0 8.5 8.5">
<path d="M0.45 3V0.45H5.8V1.3" fill="none" stroke="#8a8a8a" stroke-width="0.9"/>
<path d="M2.5 4.2V2.9H8V5.2" fill="none" stroke="#8a8a8a" stroke-width="0.9"/>
<rect x="3.4" y="3.4" width="1.8" height="1.2" fill="#f25aa8"/>
<rect x="0.45" y="5.45" width="5.5" height="2.8" fill="#d8d8d8" stroke="#8f8f8f" stroke-width="0.9"/>
<rect x="1.1" y="6.2" width="1.8" height="1.3" fill="#f25aa8"/></svg>
<div class="t" style="left:366.7px;top:175px;font-size:6.5px;line-height:10px;color:#454545;transform:scaleX(0.9);transform-origin:0 0;">Network Discovery</div>
<div class="a" style="left:359.7px;top:183px;width:0.8px;height:237px;background:#e2e2e2;"></div>
<svg class="a" style="left:358.8px;top:191px" width="5" height="5" viewBox="0 0 5 5"><rect x="0.4" y="0.4" width="4.2" height="4.2" rx="0.6" fill="#fff" stroke="#a2a2a2" stroke-width="0.85"/><path d="M1.3 2.5h2.4" stroke="#8a8a8a" stroke-width="0.8"/></svg>
<svg class="a" style="left:366.2px;top:188.7px" width="8" height="8" viewBox="0 0 8.5 8.5">
<path d="M0.45 3V0.45H5.8V1.3" fill="none" stroke="#8a8a8a" stroke-width="0.9"/>
<path d="M2.5 4.2V2.9H8V5.2" fill="none" stroke="#8a8a8a" stroke-width="0.9"/>
<rect x="3.4" y="3.4" width="1.8" height="1.2" fill="#f25aa8"/>
<rect x="0.45" y="5.45" width="5.5" height="2.8" fill="#d8d8d8" stroke="#8f8f8f" stroke-width="0.9"/>
<rect x="1.1" y="6.2" width="1.8" height="1.3" fill="#f25aa8"/></svg>
<div class="t" style="left:376px;top:188px;font-size:6.5px;line-height:10px;color:#454545;transform:scaleX(0.9);transform-origin:0 0;">Network Infrastructure</div>
<div class="a" style="left:369.3px;top:196.5px;width:0.8px;height:223.5px;background:#e2e2e2;"></div>
<svg class="a" style="left:368px;top:204.4px" width="5" height="5" viewBox="0 0 5 5"><rect x="0.4" y="0.4" width="4.2" height="4.2" rx="0.6" fill="#fff" stroke="#a2a2a2" stroke-width="0.85"/><path d="M1.3 2.5h2.4" stroke="#8a8a8a" stroke-width="0.8"/></svg>
<svg class="a" style="left:375.5px;top:205px" width="7" height="4.5" viewBox="0 0 7 4.5"><rect x="0.4" y="0.4" width="6.2" height="3.7" fill="#eee" stroke="#aaa" stroke-width="0.7"/><rect x="4" y="1.2" width="2" height="2" fill="#bbb"/></svg>
<div class="t" style="left:384px;top:201px;font-size:6.5px;line-height:10px;color:#454545;transform:scaleX(0.9);transform-origin:0 0;">Inte...</div>
<div class="t" style="left:404.5px;top:202px;font-size:6.5px;line-height:10px;color:#454545;transform:scaleX(0.87);transform-origin:0 0;font-style:italic;color:#5a5a5a">Sensor recommendation in</div>
<div class="t" style="left:404.5px;top:209px;font-size:6.5px;line-height:10px;color:#454545;transform:scaleX(0.87);transform-origin:0 0;font-style:italic;color:#5a5a5a">progress (17%)</div>
<svg class="a" style="left:484px;top:204px" width="6.5" height="5" viewBox="0 0 6.5 5"><path d="M0.5 0.2v4.8" stroke="#d2d2d2" stroke-width="0.8"/><path d="M0.9 0.6h4.9l-0.9 1.3 0.9 1.4h-4.9z" fill="none" stroke="#d5d5d5" stroke-width="0.6"/></svg>
<div class="a" style="left:375.5px;top:223px;width:288px;height:0.8px;background:#ececec;"></div>
<svg class="a" style="left:367.8px;top:229px" width="5" height="5" viewBox="0 0 5 5"><rect x="0.4" y="0.4" width="4.2" height="4.2" rx="0.6" fill="#fff" stroke="#a2a2a2" stroke-width="0.85"/><path d="M1.3 2.5h2.4" stroke="#8a8a8a" stroke-width="0.8"/></svg>
<svg class="a" style="left:375.5px;top:229px" width="9" height="5" viewBox="0 0 9 5">
<rect x="0.45" y="0.45" width="8" height="3.9" fill="#e9e9e9" stroke="#8c8c8c" stroke-width="0.9"/>
<rect x="1.2" y="2" width="6.5" height="1.8" fill="#9a9a9a"/><rect x="1.4" y="1.6" width="2.4" height="2.2" fill="#f0288c"/></svg>
<div class="t" style="left:385.5px;top:227px;font-size:6.5px;line-height:10px;color:#454545;transform:scaleX(0.9);transform-origin:0 0;">Gateway</div>
<svg class="a" style="left:410.8px;top:228.5px" width="6.5" height="5" viewBox="0 0 6.5 5"><path d="M0.5 0.2v4.8" stroke="#555" stroke-width="0.8"/><path d="M0.9 0.5h5v3h-5z" fill="#222"/></svg>
<div class="a" style="left:375.5px;top:248px;width:288px;height:0.8px;background:#ececec;"></div>
<svg class="a" style="left:367.8px;top:254px" width="5" height="5" viewBox="0 0 5 5"><rect x="0.4" y="0.4" width="4.2" height="4.2" rx="0.6" fill="#fff" stroke="#a2a2a2" stroke-width="0.85"/><path d="M1.3 2.5h2.4" stroke="#8a8a8a" stroke-width="0.8"/></svg>
<svg class="a" style="left:375.5px;top:254px" width="9" height="5" viewBox="0 0 9 5">
<rect x="0.45" y="0.45" width="8" height="3.9" fill="#e9e9e9" stroke="#8c8c8c" stroke-width="0.9"/>
<rect x="1.2" y="2" width="6.5" height="1.8" fill="#9a9a9a"/><rect x="1.4" y="1.6" width="2.4" height="2.2" fill="#f0288c"/></svg>
<div class="t" style="left:385.5px;top:251px;font-size:6.5px;line-height:10px;color:#454545;transform:scaleX(0.9);transform-origin:0 0;">DNS/DHCP/ADS</div>
<svg class="a" style="left:432px;top:253.5px" width="6.5" height="5" viewBox="0 0 6.5 5"><path d="M0.5 0.2v4.8" stroke="#d2d2d2" stroke-width="0.8"/><path d="M0.9 0.6h4.9l-0.9 1.3 0.9 1.4h-4.9z" fill="none" stroke="#d5d5d5" stroke-width="0.6"/></svg>
<div class="a" style="left:375.5px;top:340.8px;width:288px;height:0.8px;background:#ececec;"></div>
<svg class="a" style="left:367.8px;top:343.5px" width="5" height="5" viewBox="0 0 5 5"><rect x="0.4" y="0.4" width="4.2" height="4.2" rx="0.6" fill="#fff" stroke="#a2a2a2" stroke-width="0.85"/><path d="M1.3 2.5h2.4" stroke="#8a8a8a" stroke-width="0.8"/></svg>
<svg class="a" style="left:375.5px;top:343.5px" width="9" height="5" viewBox="0 0 9 5">
<rect x="0.45" y="0.45" width="8" height="3.9" fill="#e9e9e9" stroke="#8c8c8c" stroke-width="0.9"/>
<rect x="1.2" y="2" width="6.5" height="1.8" fill="#9a9a9a"/><rect x="1.4" y="1.6" width="2.4" height="2.2" fill="#f0288c"/></svg>
<div class="t" style="left:385.5px;top:341px;font-size:6.5px;line-height:10px;color:#454545;transform:scaleX(0.9);transform-origin:0 0;">Exchange</div>
<svg class="a" style="left:413.5px;top:343px" width="6.5" height="5" viewBox="0 0 6.5 5"><path d="M0.5 0.2v4.8" stroke="#d2d2d2" stroke-width="0.8"/><path d="M0.9 0.6h4.9l-0.9 1.3 0.9 1.4h-4.9z" fill="none" stroke="#d5d5d5" stroke-width="0.6"/></svg>
<div class="a" style="left:502.80px;top:120px;width:44.3px;height:15.2px;border:0.8px solid #e4e4e4;box-sizing:border-box;background:#fff"></div>
<div class="a" style="left:502.8px;top:120px;width:7.6px;height:15.2px;background:#b7c31c;"></div>
<svg class="a" style="left:504.10px;top:122.6px" width="5.5" height="4.5" viewBox="0 0 5.5 4.5"><path d="M0.5 2.2l1.6 1.6L5 0.6" fill="none" stroke="#fff" stroke-width="1.2"/></svg>
<div class="t" style="left:511.2px;top:120px;font-size:6.5px;line-height:10px;color:#4a4a4a;transform:scaleX(0.9);transform-origin:0 0;">Core Health</div>
<div class="t" style="right:127.39999999999998px;top:127px;font-size:6.5px;line-height:10px;color:#4a4a4a;text-align:right;transform:scaleX(0.9);transform-origin:100% 0;">100 %</div>
<div class="a" style="left:548.90px;top:120px;width:44.3px;height:15.2px;border:0.8px solid #e4e4e4;box-sizing:border-box;background:#fff"></div>
<div class="a" style="left:548.9px;top:120px;width:7.6px;height:15.2px;background:#b7c31c;"></div>
<svg class="a" style="left:550.20px;top:122.6px" width="5.5" height="4.5" viewBox="0 0 5.5 4.5"><path d="M0.5 2.2l1.6 1.6L5 0.6" fill="none" stroke="#fff" stroke-width="1.2"/></svg>
<div class="t" style="left:557.3px;top:120px;font-size:6.5px;line-height:10px;color:#4a4a4a;transform:scaleX(0.9);transform-origin:0 0;">Probe Heal...</div>
<div class="t" style="right:81.29999999999995px;top:127px;font-size:6.5px;line-height:10px;color:#4a4a4a;text-align:right;transform:scaleX(0.9);transform-origin:100% 0;">100 %</div>
<div class="a" style="left:595.00px;top:120px;width:44.3px;height:15.2px;border:0.8px solid #e4e4e4;box-sizing:border-box;background:#fff"></div>
<div class="a" style="left:595.0px;top:120px;width:7.6px;height:15.2px;background:#b7c31c;"></div>
<svg class="a" style="left:596.30px;top:122.6px" width="5.5" height="4.5" viewBox="0 0 5.5 4.5"><path d="M0.5 2.2l1.6 1.6L5 0.6" fill="none" stroke="#fff" stroke-width="1.2"/></svg>
<div class="t" style="left:603.4px;top:120px;font-size:6.5px;line-height:10px;color:#4a4a4a;transform:scaleX(0.9);transform-origin:0 0;">System He...</div>
<div class="t" style="right:35.200000000000045px;top:127px;font-size:6.5px;line-height:10px;color:#4a4a4a;text-align:right;transform:scaleX(0.9);transform-origin:100% 0;">100 %</div>
<div class="a" style="left:502.80px;top:137px;width:44.3px;height:15.2px;border:0.8px solid #e4e4e4;box-sizing:border-box;background:#fff"></div>
<div class="a" style="left:502.8px;top:137px;width:7.6px;height:15.2px;background:#b7c31c;"></div>
<svg class="a" style="left:504.10px;top:139.6px" width="5.5" height="4.5" viewBox="0 0 5.5 4.5"><path d="M0.5 2.2l1.6 1.6L5 0.6" fill="none" stroke="#fff" stroke-width="1.2"/></svg>
<div class="t" style="left:511.2px;top:137px;font-size:6.5px;line-height:10px;color:#4a4a4a;transform:scaleX(0.9);transform-origin:0 0;">Common S...</div>
<div class="t" style="right:127.39999999999998px;top:144px;font-size:6.5px;line-height:10px;color:#4a4a4a;text-align:right;transform:scaleX(0.9);transform-origin:100% 0;">100 %</div>
<div class="a" style="left:548.90px;top:137px;width:44.3px;height:15.2px;border:0.8px solid #e4e4e4;box-sizing:border-box;background:#fff"></div>
<div class="a" style="left:548.9px;top:137px;width:7.6px;height:15.2px;background:#b7c31c;"></div>
<svg class="a" style="left:550.20px;top:139.6px" width="5.5" height="4.5" viewBox="0 0 5.5 4.5"><path d="M0.5 2.2l1.6 1.6L5 0.6" fill="none" stroke="#fff" stroke-width="1.2"/></svg>
<div class="t" style="left:557.3px;top:137px;font-size:6.5px;line-height:10px;color:#4a4a4a;transform:scaleX(0.9);transform-origin:0 0;">Disk Free</div>
<div class="t" style="right:81.29999999999995px;top:144px;font-size:6.5px;line-height:10px;color:#4a4a4a;text-align:right;transform:scaleX(0.9);transform-origin:100% 0;">79 %</div>
<div class="a" style="left:595.00px;top:137px;width:44.3px;height:15.2px;border:0.8px solid #e4e4e4;box-sizing:border-box;background:#fff"></div>
<div class="a" style="left:595.0px;top:137px;width:7.6px;height:15.2px;background:#b7c31c;"></div>
<svg class="a" style="left:596.30px;top:139.6px" width="5.5" height="4.5" viewBox="0 0 5.5 4.5"><path d="M0.5 2.2l1.6 1.6L5 0.6" fill="none" stroke="#fff" stroke-width="1.2"/></svg>
<div class="t" style="left:603.4px;top:137px;font-size:6.5px;line-height:10px;color:#4a4a4a;transform:scaleX(0.9);transform-origin:0 0;">Intel[R] 825...</div>
<div class="t" style="right:35.200000000000045px;top:144px;font-size:6.5px;line-height:10px;color:#4a4a4a;text-align:right;transform:scaleX(0.9);transform-origin:100% 0;">445 kbit/s</div>
<div class="a" style="left:502.80px;top:155px;width:44.3px;height:15.2px;border:0.8px solid #e4e4e4;border-bottom:1.5px solid #f07a86;box-sizing:border-box;background:#fff"></div>
<div class="a" style="left:502.8px;top:155px;width:7.6px;height:15.2px;background:#e2001a;"></div>
<svg class="a" style="left:504.50px;top:157.2px" width="4.5" height="5" viewBox="0 0 4.5 5"><path d="M0.3 0h1.2l-0.2 3.2h-0.8zM2.8 0h1.2l-0.2 3.2h-0.8z" fill="#fff"/><rect x="0.4" y="3.8" width="1" height="1" fill="#fff"/><rect x="2.9" y="3.8" width="1" height="1" fill="#fff"/></svg>
<div class="t" style="left:511.2px;top:155px;font-size:6.5px;line-height:10px;color:#4a4a4a;transform:scaleX(0.9);transform-origin:0 0;">SNMP CPU...</div>
<div class="a" style="left:502.80px;top:205px;width:44.3px;height:15.2px;border:0.8px solid #e4e4e4;box-sizing:border-box;background:#fff"></div>
<div class="a" style="left:502.8px;top:205px;width:7.6px;height:15.2px;background:#b7c31c;"></div>
<svg class="a" style="left:504.10px;top:207.6px" width="5.5" height="4.5" viewBox="0 0 5.5 4.5"><path d="M0.5 2.2l1.6 1.6L5 0.6" fill="none" stroke="#fff" stroke-width="1.2"/></svg>
<div class="t" style="left:511.2px;top:205px;font-size:6.5px;line-height:10px;color:#4a4a4a;transform:scaleX(0.9);transform-origin:0 0;">HTTP</div>
<div class="t" style="right:127.39999999999998px;top:212px;font-size:6.5px;line-height:10px;color:#4a4a4a;text-align:right;transform:scaleX(0.9);transform-origin:100% 0;">151 msec</div>
<div class="a" style="left:502.80px;top:230px;width:44.3px;height:15.2px;border:0.8px solid #e4e4e4;box-sizing:border-box;background:#fff"></div>
<div class="a" style="left:502.8px;top:230px;width:7.6px;height:15.2px;background:#b7c31c;"></div>
<svg class="a" style="left:504.10px;top:232.6px" width="5.5" height="4.5" viewBox="0 0 5.5 4.5"><path d="M0.5 2.2l1.6 1.6L5 0.6" fill="none" stroke="#fff" stroke-width="1.2"/></svg>
<div class="t" style="left:511.2px;top:230px;font-size:6.5px;line-height:10px;color:#4a4a4a;transform:scaleX(0.9);transform-origin:0 0;">PING</div>
<div class="t" style="right:127.39999999999998px;top:237px;font-size:6.5px;line-height:10px;color:#4a4a4a;text-align:right;transform:scaleX(0.9);transform-origin:100% 0;">0 msec</div>
<div class="a" style="left:548.90px;top:230px;width:44.3px;height:15.2px;border:0.8px solid #e4e4e4;box-sizing:border-box;background:#fff"></div>
<div class="a" style="left:548.9px;top:230px;width:7.6px;height:15.2px;background:#b7c31c;"></div>
<svg class="a" style="left:550.20px;top:232.6px" width="5.5" height="4.5" viewBox="0 0 5.5 4.5"><path d="M0.5 2.2l1.6 1.6L5 0.6" fill="none" stroke="#fff" stroke-width="1.2"/></svg>
<div class="t" style="left:557.3px;top:230px;font-size:6.5px;line-height:10px;color:#4a4a4a;transform:scaleX(0.9);transform-origin:0 0;">HTTP</div>
<div class="t" style="right:81.29999999999995px;top:237px;font-size:6.5px;line-height:10px;color:#4a4a4a;text-align:right;transform:scaleX(0.9);transform-origin:100% 0;">93 msec</div>
<div class="a" style="left:502.80px;top:254px;width:44.3px;height:15.2px;border:0.8px solid #e4e4e4;box-sizing:border-box;background:#fff"></div>
<div class="a" style="left:502.8px;top:254px;width:7.6px;height:15.2px;background:#b7c31c;"></div>
<svg class="a" style="left:504.10px;top:256.6px" width="5.5" height="4.5" viewBox="0 0 5.5 4.5"><path d="M0.5 2.2l1.6 1.6L5 0.6" fill="none" stroke="#fff" stroke-width="1.2"/></svg>
<div class="t" style="left:511.2px;top:254px;font-size:6.5px;line-height:10px;color:#4a4a4a;transform:scaleX(0.9);transform-origin:0 0;">PING</div>
<div class="t" style="right:127.39999999999998px;top:261px;font-size:6.5px;line-height:10px;color:#4a4a4a;text-align:right;transform:scaleX(0.9);transform-origin:100% 0;">1 msec</div>
<div class="a" style="left:548.90px;top:254px;width:44.3px;height:15.2px;border:0.8px solid #e4e4e4;box-sizing:border-box;background:#fff"></div>
<div class="a" style="left:548.9px;top:254px;width:7.6px;height:15.2px;background:#b7c31c;"></div>
<svg class="a" style="left:550.20px;top:256.6px" width="5.5" height="4.5" viewBox="0 0 5.5 4.5"><path d="M0.5 2.2l1.6 1.6L5 0.6" fill="none" stroke="#fff" stroke-width="1.2"/></svg>
<div class="t" style="left:557.3px;top:254px;font-size:6.5px;line-height:10px;color:#4a4a4a;transform:scaleX(0.9);transform-origin:0 0;">RDP (Rem...</div>
<div class="t" style="right:81.29999999999995px;top:261px;font-size:6.5px;line-height:10px;color:#4a4a4a;text-align:right;transform:scaleX(0.9);transform-origin:100% 0;">15 msec</div>
<div class="a" style="left:595.00px;top:254px;width:44.3px;height:15.2px;border:0.8px solid #e4e4e4;box-sizing:border-box;background:#fff"></div>
<div class="a" style="left:595.0px;top:254px;width:7.6px;height:15.2px;background:#b7c31c;"></div>
<svg class="a" style="left:596.30px;top:256.6px" width="5.5" height="4.5" viewBox="0 0 5.5 4.5"><path d="M0.5 2.2l1.6 1.6L5 0.6" fill="none" stroke="#fff" stroke-width="1.2"/></svg>
<div class="t" style="left:603.4px;top:254px;font-size:6.5px;line-height:10px;color:#4a4a4a;transform:scaleX(0.9);transform-origin:0 0;">DNS</div>
<div class="t" style="right:35.200000000000045px;top:261px;font-size:6.5px;line-height:10px;color:#4a4a4a;text-align:right;transform:scaleX(0.9);transform-origin:100% 0;">4 msec</div>
<div class="a" style="left:502.80px;top:272px;width:44.3px;height:15.2px;border:0.8px solid #e4e4e4;box-sizing:border-box;background:#fff"></div>
<div class="a" style="left:502.8px;top:272px;width:7.6px;height:15.2px;background:#b7c31c;"></div>
<svg class="a" style="left:504.10px;top:274.6px" width="5.5" height="4.5" viewBox="0 0 5.5 4.5"><path d="M0.5 2.2l1.6 1.6L5 0.6" fill="none" stroke="#fff" stroke-width="1.2"/></svg>
<div class="t" style="left:511.2px;top:272px;font-size:6.5px;line-height:10px;color:#4a4a4a;transform:scaleX(0.9);transform-origin:0 0;">CPU Load</div>
<div class="t" style="right:127.39999999999998px;top:279px;font-size:6.5px;line-height:10px;color:#4a4a4a;text-align:right;transform:scaleX(0.9);transform-origin:100% 0;">3 %</div>
<div class="a" style="left:548.90px;top:272px;width:44.3px;height:15.2px;border:0.8px solid #e4e4e4;box-sizing:border-box;background:#fff"></div>
<div class="a" style="left:548.9px;top:272px;width:7.6px;height:15.2px;background:#b7c31c;"></div>
<svg class="a" style="left:550.20px;top:274.6px" width="5.5" height="4.5" viewBox="0 0 5.5 4.5"><path d="M0.5 2.2l1.6 1.6L5 0.6" fill="none" stroke="#fff" stroke-width="1.2"/></svg>
<div class="t" style="left:557.3px;top:272px;font-size:6.5px;line-height:10px;color:#4a4a4a;transform:scaleX(0.9);transform-origin:0 0;">Memory</div>
<div class="t" style="right:81.29999999999995px;top:279px;font-size:6.5px;line-height:10px;color:#4a4a4a;text-align:right;transform:scaleX(0.9);transform-origin:100% 0;">83 %</div>
<div class="a" style="left:595.00px;top:272px;width:44.3px;height:15.2px;border:0.8px solid #e4e4e4;box-sizing:border-box;background:#fff"></div>
<div class="a" style="left:595.0px;top:272px;width:7.6px;height:15.2px;background:#b7c31c;"></div>
<svg class="a" style="left:596.30px;top:274.6px" width="5.5" height="4.5" viewBox="0 0 5.5 4.5"><path d="M0.5 2.2l1.6 1.6L5 0.6" fill="none" stroke="#fff" stroke-width="1.2"/></svg>
<div class="t" style="left:603.4px;top:272px;font-size:6.5px;line-height:10px;color:#4a4a4a;transform:scaleX(0.9);transform-origin:0 0;">Disk Free</div>
<div class="t" style="right:35.200000000000045px;top:279px;font-size:6.5px;line-height:10px;color:#4a4a4a;text-align:right;transform:scaleX(0.9);transform-origin:100% 0;">71 %</div>
<div class="a" style="left:502.80px;top:289px;width:44.3px;height:15.2px;border:0.8px solid #e4e4e4;box-sizing:border-box;background:#fff"></div>
<div class="a" style="left:502.8px;top:289px;width:7.6px;height:15.2px;background:#b7c31c;"></div>
<svg class="a" style="left:504.10px;top:291.6px" width="5.5" height="4.5" viewBox="0 0 5.5 4.5"><path d="M0.5 2.2l1.6 1.6L5 0.6" fill="none" stroke="#fff" stroke-width="1.2"/></svg>
<div class="t" style="left:511.2px;top:289px;font-size:6.5px;line-height:10px;color:#4a4a4a;transform:scaleX(0.9);transform-origin:0 0;">Pagefile Us...</div>
<div class="t" style="right:127.39999999999998px;top:296px;font-size:6.5px;line-height:10px;color:#4a4a4a;text-align:right;transform:scaleX(0.9);transform-origin:100% 0;">0 %</div>
<div class="a" style="left:548.90px;top:289px;width:44.3px;height:15.2px;border:0.8px solid #e4e4e4;box-sizing:border-box;background:#fff"></div>
<div class="a" style="left:548.9px;top:289px;width:7.6px;height:15.2px;background:#b7c31c;"></div>
<svg class="a" style="left:550.20px;top:291.6px" width="5.5" height="4.5" viewBox="0 0 5.5 4.5"><path d="M0.5 2.2l1.6 1.6L5 0.6" fill="none" stroke="#fff" stroke-width="1.2"/></svg>
<div class="t" style="left:557.3px;top:289px;font-size:6.5px;line-height:10px;color:#4a4a4a;transform:scaleX(0.9);transform-origin:0 0;">Uptime</div>
<div class="t" style="right:81.29999999999995px;top:296px;font-size:6.5px;line-height:10px;color:#4a4a4a;text-align:right;transform:scaleX(0.9);transform-origin:100% 0;">9 d 12 h</div>
<div class="a" style="left:595.00px;top:289px;width:44.3px;height:15.2px;border:0.8px solid #e4e4e4;box-sizing:border-box;background:#fff"></div>
<div class="a" style="left:595.0px;top:289px;width:7.6px;height:15.2px;background:#b7c31c;"></div>
<svg class="a" style="left:596.30px;top:291.6px" width="5.5" height="4.5" viewBox="0 0 5.5 4.5"><path d="M0.5 2.2l1.6 1.6L5 0.6" fill="none" stroke="#fff" stroke-width="1.2"/></svg>
<div class="t" style="left:603.4px;top:289px;font-size:6.5px;line-height:10px;color:#4a4a4a;transform:scaleX(0.9);transform-origin:0 0;">Gigabit-Net...</div>
<div class="t" style="right:35.200000000000045px;top:296px;font-size:6.5px;line-height:10px;color:#4a4a4a;text-align:right;transform:scaleX(0.9);transform-origin:100% 0;">1,672 kbit/s</div>
<div class="a" style="left:502.80px;top:306px;width:44.3px;height:15.2px;border:0.8px solid #e4e4e4;box-sizing:border-box;background:#fff"></div>
<div class="a" style="left:502.8px;top:306px;width:7.6px;height:15.2px;background:#b7c31c;"></div>
<svg class="a" style="left:504.10px;top:308.6px" width="5.5" height="4.5" viewBox="0 0 5.5 4.5"><path d="M0.5 2.2l1.6 1.6L5 0.6" fill="none" stroke="#fff" stroke-width="1.2"/></svg>
<div class="t" style="left:511.2px;top:306px;font-size:6.5px;line-height:10px;color:#4a4a4a;transform:scaleX(0.9);transform-origin:0 0;">Disk IO _To...</div>
<div class="t" style="right:127.39999999999998px;top:313px;font-size:6.5px;line-height:10px;color:#4a4a4a;text-align:right;transform:scaleX(0.9);transform-origin:100% 0;">&lt;1 %</div>
<div class="a" style="left:548.90px;top:306px;width:44.3px;height:15.2px;border:0.8px solid #e4e4e4;box-sizing:border-box;background:#fff"></div>
<div class="a" style="left:548.9px;top:306px;width:7.6px;height:15.2px;background:#b7c31c;"></div>
<svg class="a" style="left:550.20px;top:308.6px" width="5.5" height="4.5" viewBox="0 0 5.5 4.5"><path d="M0.5 2.2l1.6 1.6L5 0.6" fill="none" stroke="#fff" stroke-width="1.2"/></svg>
<div class="t" style="left:557.3px;top:306px;font-size:6.5px;line-height:10px;color:#4a4a4a;transform:scaleX(0.9);transform-origin:0 0;">Disk IO 0 C:</div>
<div class="t" style="right:81.29999999999995px;top:313px;font-size:6.5px;line-height:10px;color:#4a4a4a;text-align:right;transform:scaleX(0.9);transform-origin:100% 0;">&lt;1 %</div>
<div class="a" style="left:595.00px;top:306px;width:44.3px;height:15.2px;border:0.8px solid #e4e4e4;box-sizing:border-box;background:#fff"></div>
<div class="a" style="left:595.0px;top:306px;width:7.6px;height:15.2px;background:#b7c31c;"></div>
<svg class="a" style="left:596.30px;top:308.6px" width="5.5" height="4.5" viewBox="0 0 5.5 4.5"><path d="M0.5 2.2l1.6 1.6L5 0.6" fill="none" stroke="#fff" stroke-width="1.2"/></svg>
<div class="t" style="left:603.4px;top:306px;font-size:6.5px;line-height:10px;color:#4a4a4a;transform:scaleX(0.9);transform-origin:0 0;">Volume IO ...</div>
<div class="t" style="right:35.200000000000045px;top:313px;font-size:6.5px;line-height:10px;color:#4a4a4a;text-align:right;transform:scaleX(0.9);transform-origin:100% 0;">70 %</div>
<div class="a" style="left:502.80px;top:323px;width:44.3px;height:15.2px;border:0.8px solid #e4e4e4;box-sizing:border-box;background:#fff"></div>
<div class="a" style="left:502.8px;top:323px;width:7.6px;height:15.2px;background:#b7c31c;"></div>
<svg class="a" style="left:504.10px;top:325.6px" width="5.5" height="4.5" viewBox="0 0 5.5 4.5"><path d="M0.5 2.2l1.6 1.6L5 0.6" fill="none" stroke="#fff" stroke-width="1.2"/></svg>
<div class="t" style="left:511.2px;top:323px;font-size:6.5px;line-height:10px;color:#4a4a4a;transform:scaleX(0.9);transform-origin:0 0;">Volume IO ...</div>
<div class="t" style="right:127.39999999999998px;top:330px;font-size:6.5px;line-height:10px;color:#4a4a4a;text-align:right;transform:scaleX(0.9);transform-origin:100% 0;">70 %</div>
<div class="a" style="left:548.90px;top:323px;width:44.3px;height:15.2px;border:0.8px solid #e4e4e4;box-sizing:border-box;background:#fff"></div>
<div class="a" style="left:548.9px;top:323px;width:7.6px;height:15.2px;background:#b7c31c;"></div>
<svg class="a" style="left:550.20px;top:325.6px" width="5.5" height="4.5" viewBox="0 0 5.5 4.5"><path d="M0.5 2.2l1.6 1.6L5 0.6" fill="none" stroke="#fff" stroke-width="1.2"/></svg>
<div class="t" style="left:557.3px;top:323px;font-size:6.5px;line-height:10px;color:#4a4a4a;transform:scaleX(0.9);transform-origin:0 0;">Volume IO ...</div>
<div class="t" style="right:81.29999999999995px;top:330px;font-size:6.5px;line-height:10px;color:#4a4a4a;text-align:right;transform:scaleX(0.9);transform-origin:100% 0;">16 %</div>
<div class="a" style="left:0;top:0;width:672px;height:420.4px;overflow:hidden">
<div class="a" style="left:502.80px;top:344px;width:44.3px;height:15.2px;border:0.8px solid #e4e4e4;box-sizing:border-box;background:#fff"></div>
<div class="a" style="left:502.8px;top:344px;width:7.6px;height:15.2px;background:#b7c31c;"></div>
<svg class="a" style="left:504.10px;top:346.6px" width="5.5" height="4.5" viewBox="0 0 5.5 4.5"><path d="M0.5 2.2l1.6 1.6L5 0.6" fill="none" stroke="#fff" stroke-width="1.2"/></svg>
<div class="t" style="left:511.2px;top:344px;font-size:6.5px;line-height:10px;color:#4a4a4a;transform:scaleX(0.9);transform-origin:0 0;">PING</div>
<div class="t" style="right:127.39999999999998px;top:351px;font-size:6.5px;line-height:10px;color:#4a4a4a;text-align:right;transform:scaleX(0.9);transform-origin:100% 0;">1 msec</div>
<div class="a" style="left:548.90px;top:344px;width:44.3px;height:15.2px;border:0.8px solid #e4e4e4;border-bottom:1.5px solid #f7cc4a;box-sizing:border-box;background:#fff"></div>
<div class="a" style="left:548.9px;top:344px;width:7.6px;height:15.2px;background:#f5bf00;"></div>
<div class="t" style="left:550.0px;top:344px;font-size:6px;line-height:10px;color:#fff;transform:scaleX(0.95);transform-origin:0 0;font-weight:bold">W</div>
<div class="t" style="left:557.3px;top:344px;font-size:6.5px;line-height:10px;color:#4a4a4a;transform:scaleX(0.9);transform-origin:0 0;">SSL Certifi...</div>
<div class="t" style="right:81.29999999999995px;top:351px;font-size:6.5px;line-height:10px;color:#4a4a4a;text-align:right;transform:scaleX(0.9);transform-origin:100% 0;">1,501</div>
<div class="a" style="left:595.00px;top:344px;width:44.3px;height:15.2px;border:0.8px solid #e4e4e4;border-bottom:1.5px solid #f07a86;box-sizing:border-box;background:#fff"></div>
<div class="a" style="left:595.0px;top:344px;width:7.6px;height:15.2px;background:#e2001a;"></div>
<svg class="a" style="left:596.70px;top:346.2px" width="4.5" height="5" viewBox="0 0 4.5 5"><path d="M0.3 0h1.2l-0.2 3.2h-0.8zM2.8 0h1.2l-0.2 3.2h-0.8z" fill="#fff"/><rect x="0.4" y="3.8" width="1" height="1" fill="#fff"/><rect x="2.9" y="3.8" width="1" height="1" fill="#fff"/></svg>
<div class="t" style="left:603.4px;top:344px;font-size:6.5px;line-height:10px;color:#4a4a4a;transform:scaleX(0.9);transform-origin:0 0;">SSL Certifi...</div>
<div class="a" style="left:502.80px;top:361px;width:44.3px;height:15.2px;border:0.8px solid #e4e4e4;border-bottom:1.5px solid #f7cc4a;box-sizing:border-box;background:#fff"></div>
<div class="a" style="left:502.8px;top:361px;width:7.6px;height:15.2px;background:#f5bf00;"></div>
<div class="t" style="left:503.9px;top:361px;font-size:6px;line-height:10px;color:#fff;transform:scaleX(0.95);transform-origin:0 0;font-weight:bold">W</div>
<div class="t" style="left:511.2px;top:361px;font-size:6.5px;line-height:10px;color:#4a4a4a;transform:scaleX(0.9);transform-origin:0 0;">SSL Certifi...</div>
<div class="t" style="right:127.39999999999998px;top:368px;font-size:6.5px;line-height:10px;color:#4a4a4a;text-align:right;transform:scaleX(0.9);transform-origin:100% 0;">1,501</div>
<div class="a" style="left:548.90px;top:361px;width:44.3px;height:15.2px;border:0.8px solid #e4e4e4;border-bottom:1.5px solid #f7cc4a;box-sizing:border-box;background:#fff"></div>
<div class="a" style="left:548.9px;top:361px;width:7.6px;height:15.2px;background:#f5bf00;"></div>
<div class="t" style="left:550.0px;top:361px;font-size:6px;line-height:10px;color:#fff;transform:scaleX(0.95);transform-origin:0 0;font-weight:bold">W</div>
<div class="t" style="left:557.3px;top:361px;font-size:6.5px;line-height:10px;color:#4a4a4a;transform:scaleX(0.9);transform-origin:0 0;">SSL Securi...</div>
<div class="t" style="left:557.3px;top:368px;font-size:6.5px;line-height:10px;color:#4a4a4a;transform:scaleX(0.9);transform-origin:0 0;">Weak Proto...</div>
<div class="a" style="left:595.00px;top:361px;width:44.3px;height:15.2px;border:0.8px solid #e4e4e4;border-bottom:1.5px solid #f07a86;box-sizing:border-box;background:#fff"></div>
<div class="a" style="left:595.0px;top:361px;width:7.6px;height:15.2px;background:#e2001a;"></div>
<svg class="a" style="left:596.70px;top:363.2px" width="4.5" height="5" viewBox="0 0 4.5 5"><path d="M0.3 0h1.2l-0.2 3.2h-0.8zM2.8 0h1.2l-0.2 3.2h-0.8z" fill="#fff"/><rect x="0.4" y="3.8" width="1" height="1" fill="#fff"/><rect x="2.9" y="3.8" width="1" height="1" fill="#fff"/></svg>
<div class="t" style="left:603.4px;top:361px;font-size:6.5px;line-height:10px;color:#4a4a4a;transform:scaleX(0.9);transform-origin:0 0;">SSL Securi...</div>
<div class="a" style="left:502.80px;top:378px;width:44.3px;height:15.2px;border:0.8px solid #e4e4e4;border-bottom:1.5px solid #f7cc4a;box-sizing:border-box;background:#fff"></div>
<div class="a" style="left:502.8px;top:378px;width:7.6px;height:15.2px;background:#f5bf00;"></div>
<div class="t" style="left:503.9px;top:378px;font-size:6px;line-height:10px;color:#fff;transform:scaleX(0.95);transform-origin:0 0;font-weight:bold">W</div>
<div class="t" style="left:511.2px;top:378px;font-size:6.5px;line-height:10px;color:#4a4a4a;transform:scaleX(0.9);transform-origin:0 0;">SSL Securi...</div>
<div class="t" style="left:511.2px;top:385px;font-size:6.5px;line-height:10px;color:#4a4a4a;transform:scaleX(0.9);transform-origin:0 0;">Weak Proto...</div>
<div class="a" style="left:548.90px;top:378px;width:44.3px;height:15.2px;border:0.8px solid #e4e4e4;border-bottom:1.5px solid #f7cc4a;box-sizing:border-box;background:#fff"></div>
<div class="a" style="left:548.9px;top:378px;width:7.6px;height:15.2px;background:#f5bf00;"></div>
<div class="t" style="left:550.0px;top:378px;font-size:6px;line-height:10px;color:#fff;transform:scaleX(0.95);transform-origin:0 0;font-weight:bold">W</div>
<div class="t" style="left:557.3px;top:378px;font-size:6.5px;line-height:10px;color:#4a4a4a;transform:scaleX(0.9);transform-origin:0 0;">SSL Certifi...</div>
<div class="t" style="right:81.29999999999995px;top:385px;font-size:6.5px;line-height:10px;color:#4a4a4a;text-align:right;transform:scaleX(0.9);transform-origin:100% 0;">1,501</div>
<div class="a" style="left:595.00px;top:378px;width:44.3px;height:15.2px;border:0.8px solid #e4e4e4;border-bottom:1.5px solid #f7cc4a;box-sizing:border-box;background:#fff"></div>
<div class="a" style="left:595.0px;top:378px;width:7.6px;height:15.2px;background:#f5bf00;"></div>
<div class="t" style="left:596.1px;top:378px;font-size:6px;line-height:10px;color:#fff;transform:scaleX(0.95);transform-origin:0 0;font-weight:bold">W</div>
<div class="t" style="left:603.4px;top:378px;font-size:6.5px;line-height:10px;color:#4a4a4a;transform:scaleX(0.9);transform-origin:0 0;">SSL Securi...</div>
<div class="t" style="left:603.4px;top:385px;font-size:6.5px;line-height:10px;color:#4a4a4a;transform:scaleX(0.9);transform-origin:0 0;">Weak Proto...</div>
<div class="a" style="left:502.80px;top:395px;width:44.3px;height:15.2px;border:0.8px solid #e4e4e4;box-sizing:border-box;background:#fff"></div>
<div class="a" style="left:502.8px;top:395px;width:7.6px;height:15.2px;background:#b7c31c;"></div>
<svg class="a" style="left:504.10px;top:397.6px" width="5.5" height="4.5" viewBox="0 0 5.5 4.5"><path d="M0.5 2.2l1.6 1.6L5 0.6" fill="none" stroke="#fff" stroke-width="1.2"/></svg>
<div class="t" style="left:511.2px;top:395px;font-size:6.5px;line-height:10px;color:#4a4a4a;transform:scaleX(0.9);transform-origin:0 0;">HTTPS</div>
<div class="t" style="right:127.39999999999998px;top:402px;font-size:6.5px;line-height:10px;color:#4a4a4a;text-align:right;transform:scaleX(0.9);transform-origin:100% 0;">94 msec</div>
<div class="a" style="left:548.90px;top:395px;width:44.3px;height:15.2px;border:0.8px solid #e4e4e4;box-sizing:border-box;background:#fff"></div>
<div class="a" style="left:548.9px;top:395px;width:7.6px;height:15.2px;background:#b7c31c;"></div>
<svg class="a" style="left:550.20px;top:397.6px" width="5.5" height="4.5" viewBox="0 0 5.5 4.5"><path d="M0.5 2.2l1.6 1.6L5 0.6" fill="none" stroke="#fff" stroke-width="1.2"/></svg>
<div class="t" style="left:557.3px;top:395px;font-size:6.5px;line-height:10px;color:#4a4a4a;transform:scaleX(0.9);transform-origin:0 0;">RDP (Rem...</div>
<div class="t" style="right:81.29999999999995px;top:402px;font-size:6.5px;line-height:10px;color:#4a4a4a;text-align:right;transform:scaleX(0.9);transform-origin:100% 0;">15 msec</div>
<div class="a" style="left:595.00px;top:395px;width:44.3px;height:15.2px;border:0.8px solid #e4e4e4;box-sizing:border-box;background:#fff"></div>
<div class="a" style="left:595.0px;top:395px;width:7.6px;height:15.2px;background:#b7c31c;"></div>
<svg class="a" style="left:596.30px;top:397.6px" width="5.5" height="4.5" viewBox="0 0 5.5 4.5"><path d="M0.5 2.2l1.6 1.6L5 0.6" fill="none" stroke="#fff" stroke-width="1.2"/></svg>
<div class="t" style="left:603.4px;top:395px;font-size:6.5px;line-height:10px;color:#4a4a4a;transform:scaleX(0.9);transform-origin:0 0;">IMAP</div>
<div class="t" style="right:35.200000000000045px;top:402px;font-size:6.5px;line-height:10px;color:#4a4a4a;text-align:right;transform:scaleX(0.9);transform-origin:100% 0;">11 msec</div>
<div class="a" style="left:502.80px;top:412px;width:44.3px;height:15.2px;border:0.8px solid #e4e4e4;box-sizing:border-box;background:#fff"></div>
<div class="a" style="left:502.8px;top:412px;width:7.6px;height:15.2px;background:#b7c31c;"></div>
<svg class="a" style="left:504.10px;top:414.6px" width="5.5" height="4.5" viewBox="0 0 5.5 4.5"><path d="M0.5 2.2l1.6 1.6L5 0.6" fill="none" stroke="#fff" stroke-width="1.2"/></svg>
<div class="t" style="left:511.2px;top:412px;font-size:6.5px;line-height:10px;color:#4a4a4a;transform:scaleX(0.9);transform-origin:0 0;">POP3</div>
<div class="t" style="right:127.39999999999998px;top:419px;font-size:6.5px;line-height:10px;color:#4a4a4a;text-align:right;transform:scaleX(0.9);transform-origin:100% 0;"></div>
<div class="a" style="left:548.90px;top:412px;width:44.3px;height:15.2px;border:0.8px solid #e4e4e4;box-sizing:border-box;background:#fff"></div>
<div class="a" style="left:548.9px;top:412px;width:7.6px;height:15.2px;background:#b7c31c;"></div>
<svg class="a" style="left:550.20px;top:414.6px" width="5.5" height="4.5" viewBox="0 0 5.5 4.5"><path d="M0.5 2.2l1.6 1.6L5 0.6" fill="none" stroke="#fff" stroke-width="1.2"/></svg>
<div class="t" style="left:557.3px;top:412px;font-size:6.5px;line-height:10px;color:#4a4a4a;transform:scaleX(0.9);transform-origin:0 0;">SMTP</div>
<div class="t" style="right:81.29999999999995px;top:419px;font-size:6.5px;line-height:10px;color:#4a4a4a;text-align:right;transform:scaleX(0.9);transform-origin:100% 0;"></div>
<div class="a" style="left:595.00px;top:412px;width:44.3px;height:15.2px;border:0.8px solid #e4e4e4;box-sizing:border-box;background:#fff"></div>
<div class="a" style="left:595.0px;top:412px;width:7.6px;height:15.2px;background:#b7c31c;"></div>
<svg class="a" style="left:596.30px;top:414.6px" width="5.5" height="4.5" viewBox="0 0 5.5 4.5"><path d="M0.5 2.2l1.6 1.6L5 0.6" fill="none" stroke="#fff" stroke-width="1.2"/></svg>
<div class="t" style="left:603.4px;top:412px;font-size:6.5px;line-height:10px;color:#4a4a4a;transform:scaleX(0.9);transform-origin:0 0;">CPU Load</div>
<div class="t" style="right:35.200000000000045px;top:419px;font-size:6.5px;line-height:10px;color:#4a4a4a;text-align:right;transform:scaleX(0.9);transform-origin:100% 0;"></div>
</div>
</body></html>
